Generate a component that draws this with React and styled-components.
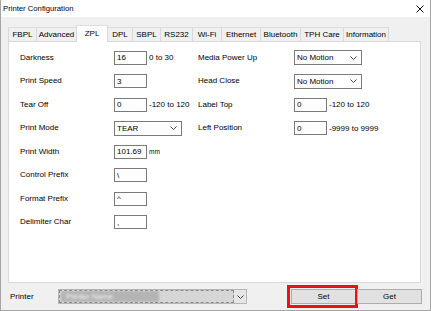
import React from 'react';
import styled, { createGlobalStyle } from 'styled-components';

const GlobalStyle = createGlobalStyle`
  * { box-sizing: border-box; }
  html, body { margin: 0; padding: 0; background: #ffffff; }
  body {
    font-family: "Liberation Sans", Arial, sans-serif;
    font-size: 8px;
    color: #000;
  }
`;

const Window = styled.div`
  width: 431px;
  height: 311px;
  display: flex;
  flex-direction: column;
  background: #f0f0f0;
  border: 1px solid #a5a5a5;
  border-top: none;
  overflow: hidden;
`;

const TitleBar = styled.div`
  height: 17px;
  flex: none;
  background: #ffffff;
  display: flex;
  align-items: center;
  justify-content: space-between;
  padding: 0 6px 0 2px;
  font-size: 7.7px;
`;

const TabStrip = styled.div`
  display: flex;
  align-items: flex-end;
  height: 24px;
  padding: 7px 0 0 7px;
  flex: none;
`;

const Tab = styled.div`
  width: ${p => p.$w}px;
  height: ${p => (p.$active ? 17 : 14)}px;
  display: flex;
  align-items: center;
  justify-content: center;
  white-space: nowrap;
  background: ${p => (p.$active ? '#ffffff' : '#f0f0f0')};
  border-top: 1px solid #dcdcdc;
  border-right: 1px solid #d9d9d9;
  border-left: ${p => (p.$first || p.$active ? '1px solid #d9d9d9' : 'none')};
  padding-bottom: ${p => (p.$active ? 2 : 0)}px;
  ${p => p.$active && 'position: relative; z-index: 1; margin-bottom: -1px; margin-left: -1px;'}
`;

const Panel = styled.div`
  margin: 0 9px 0 7px;
  height: 242px;
  flex: none;
  background: #ffffff;
  border: 1px solid #d9d9d9;
  display: flex;
  padding: 4px 0 0 11px;
`;

const Column = styled.div`
  width: ${p => p.$w}px;
  display: grid;
  grid-template-columns: ${p => p.$labelW}px auto;
  grid-template-rows: repeat(4, 23px 24px);
  align-content: start;
`;

const Label = styled.div`
  display: flex;
  align-items: center;
  white-space: nowrap;
  padding-bottom: 1px;
`;

const Field = styled.div`
  display: flex;
  align-items: center;
  gap: 2px;
`;

const TextBox = styled.input`
  width: 33px;
  height: 14px;
  margin: 0;
  padding: 0 2px;
  border: 1px solid #7a7a7a;
  border-radius: 0;
  background: #ffffff;
  font: inherit;
  font-size: 8px;
  color: #000;
  outline: none;
`;

const Unit = styled.span`
  white-space: nowrap;
  font-size: ${p => (p.$small ? 6.5 : 8)}px;
`;

const Select = styled.div`
  width: 68px;
  height: 15px;
  border: 1px solid #7a7a7a;
  background: #ffffff;
  display: flex;
  align-items: center;
  justify-content: space-between;
  padding: 0 4px 0 2px;
  white-space: nowrap;
`;

const BottomBar = styled.div`
  flex: 1;
  display: flex;
  align-items: center;
  padding: 0 8px 0 9px;
`;

const PrinterLabel = styled.div`
  width: 48px;
  white-space: nowrap;
`;

const Combo = styled.div`
  width: 189px;
  height: 15px;
  display: flex;
  border: 1px solid #b5b5b5;
  background: #e6e6e6;
`;

const ComboField = styled.div`
  flex: 1;
  border: 1px dashed #8c8c8c;
  background: #d6d6d6;
  display: flex;
  align-items: center;
  padding-left: 1px;
  overflow: hidden;
`;

const Blurred = styled.span`
  display: inline-block;
  width: 98px;
  height: 11px;
  line-height: 11px;
  background: #b4b4b4;
  color: #f6f6f6;
  padding-left: 5px;
  white-space: nowrap;
  font-size: 8px;
  filter: blur(0.8px);
`;

const ComboArrow = styled.div`
  width: 12px;
  display: flex;
  align-items: center;
  justify-content: center;
`;

const Spacer = styled.div`
  flex: 1;
`;

const Button = styled.div`
  width: 65px;
  height: 15px;
  background: #e1e1e1;
  border: 1px solid #adadad;
  display: flex;
  align-items: center;
  justify-content: center;
  margin-left: ${p => p.$gap || 0}px;
  position: relative;
  ${p =>
    p.$highlight &&
    `&::after {
      content: '';
      position: absolute;
      left: -5px;
      right: -3px;
      top: -5px;
      bottom: -5px;
      border: 3px solid #ee1111;
    }`}
`;

const Chevron = () => (
  <svg width="7" height="4" viewBox="0 0 7 4">
    <polyline points="0.5,0.5 3.5,3.5 6.5,0.5" fill="none" stroke="#444" strokeWidth="1" />
  </svg>
);

const CloseIcon = () => (
  <svg width="8" height="8" viewBox="0 0 8 8">
    <line x1="0.5" y1="0.5" x2="7.5" y2="7.5" stroke="#111" strokeWidth="1" />
    <line x1="7.5" y1="0.5" x2="0.5" y2="7.5" stroke="#111" strokeWidth="1" />
  </svg>
);

const tabs = [
  { name: 'FBPL', w: 29 },
  { name: 'Advanced', w: 40 },
  { name: 'ZPL', w: 32, active: true },
  { name: 'DPL', w: 25 },
  { name: 'SBPL', w: 28 },
  { name: 'RS232', w: 32 },
  { name: 'Wi-Fi', w: 29 },
  { name: 'Ethernet', w: 39 },
  { name: 'Bluetooth', w: 40 },
  { name: 'TPH Care', w: 43 },
  { name: 'Information', w: 45 },
];

const leftRows = [
  { label: 'Darkness', type: 'input', value: '16', unit: '0 to 30' },
  { label: 'Print Speed', type: 'input', value: '3' },
  { label: 'Tear Off', type: 'input', value: '0', unit: '-120 to 120' },
  { label: 'Print Mode', type: 'select', value: 'TEAR' },
  { label: 'Print Width', type: 'input', value: '101.69', unit: 'mm', small: true },
  { label: 'Control Prefix', type: 'input', value: '\\' },
  { label: 'Format Prefix', type: 'input', value: '^' },
  { label: 'Delimiter Char', type: 'input', value: ',' },
];

const rightRows = [
  { label: 'Media Power Up', type: 'select', value: 'No Motion' },
  { label: 'Head Close', type: 'select', value: 'No Motion' },
  { label: 'Label Top', type: 'input', value: '0', unit: '-120 to 120' },
  { label: 'Left Position', type: 'input', value: '0', unit: '-9999 to 9999' },
];

const Row = ({ row }) => (
  <>
    <Label>{row.label}</Label>
    <Field>
      {row.type === 'select' ? (
        <Select>
          <span>{row.value}</span>
          <Chevron />
        </Select>
      ) : (
        <TextBox readOnly value={row.value} />
      )}
      {row.unit && <Unit $small={row.small}>{row.unit}</Unit>}
    </Field>
  </>
);

export default function App() {
  return (
    <>
      <GlobalStyle />
      <Window>
        <TitleBar>
          <span>Printer Configuration</span>
          <CloseIcon />
        </TitleBar>
        <TabStrip>
          {tabs.map((t, i) => (
            <Tab key={t.name} $w={t.w} $active={t.active} $first={i === 0}>
              {t.name}
            </Tab>
          ))}
        </TabStrip>
        <Panel>
          <Column $w={178} $labelW={94}>
            {leftRows.map(r => (
              <Row key={r.label} row={r} />
            ))}
          </Column>
          <Column $w={200} $labelW={96}>
            {rightRows.map(r => (
              <Row key={r.label} row={r} />
            ))}
          </Column>
        </Panel>
        <BottomBar>
          <PrinterLabel>Printer</PrinterLabel>
          <Combo>
            <ComboField>
              <Blurred>Printer Name</Blurred>
            </ComboField>
            <ComboArrow>
              <Chevron />
            </ComboArrow>
          </Combo>
          <Spacer />
          <Button $highlight>Set</Button>
          <Button $gap={1}>Get</Button>
        </BottomBar>
      </Window>
    </>
  );
}
